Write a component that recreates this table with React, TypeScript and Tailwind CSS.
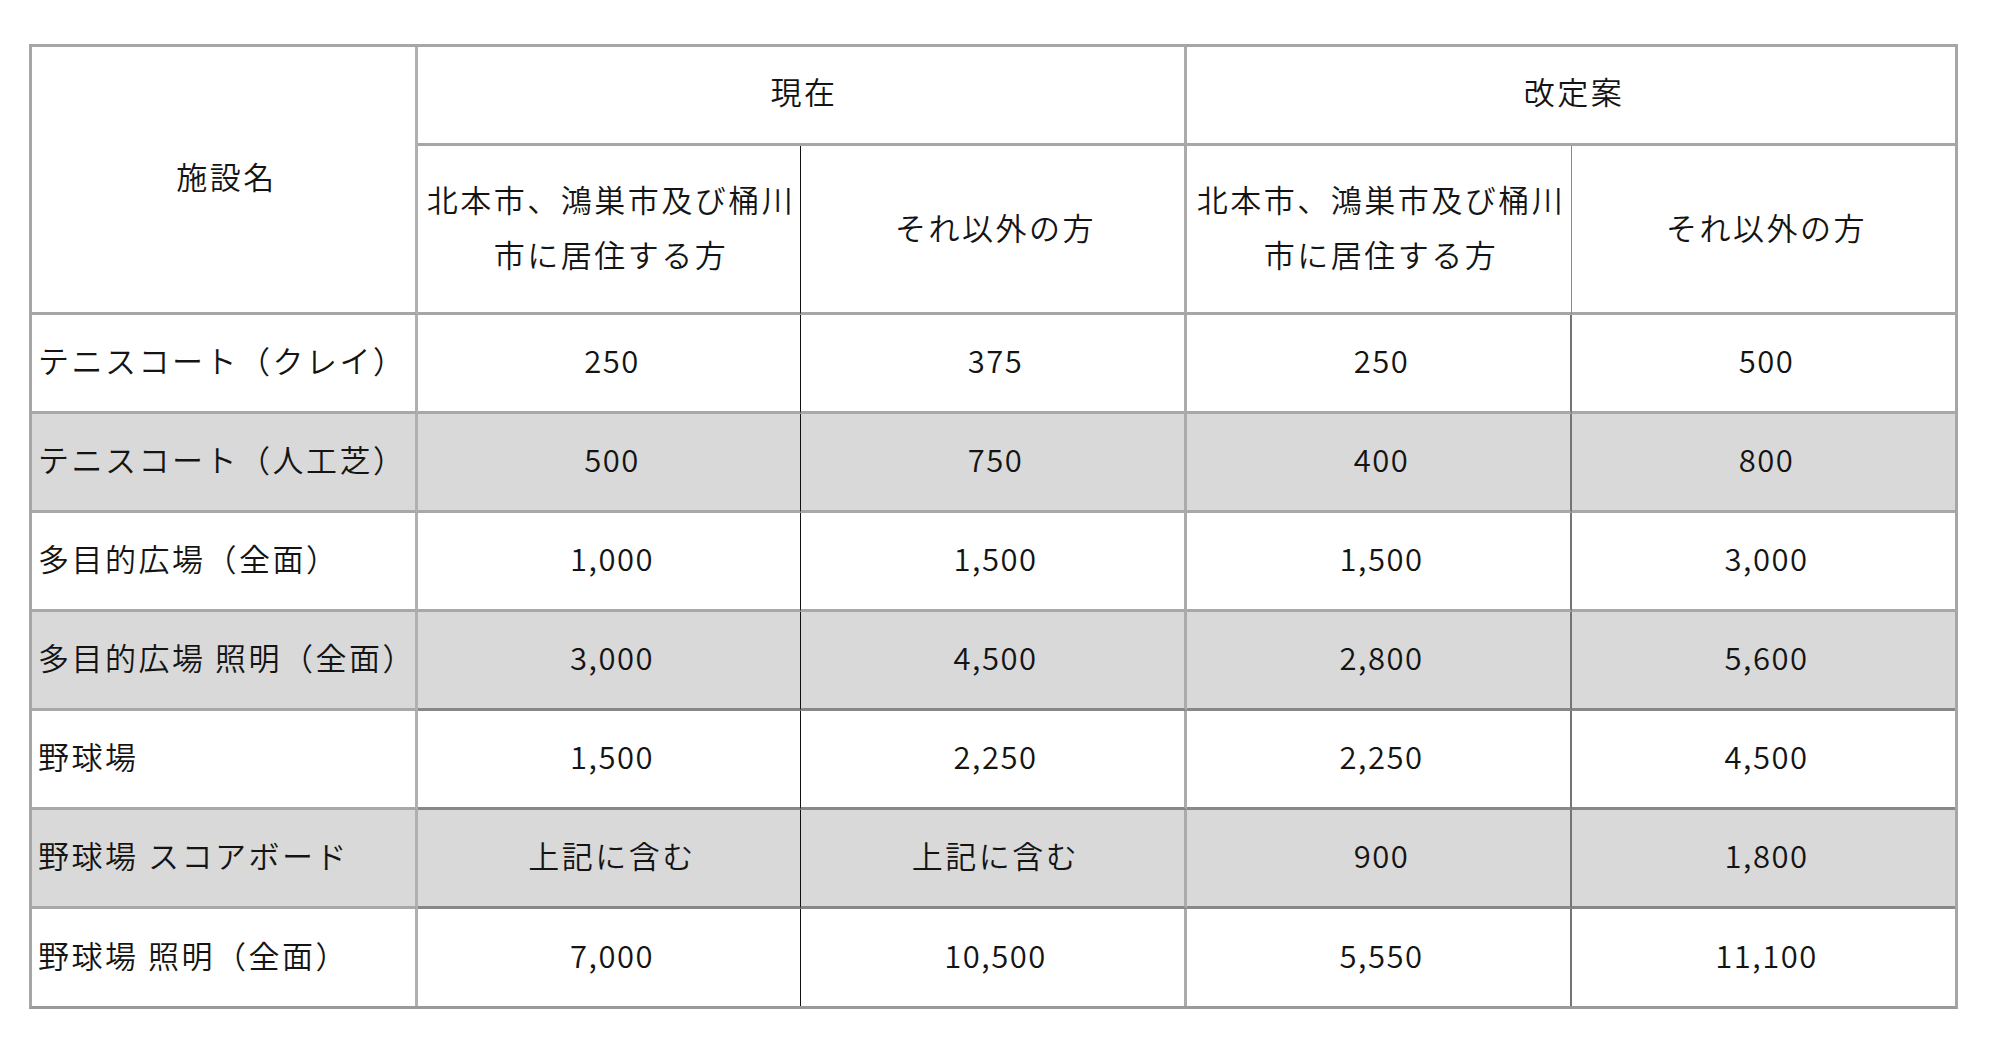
import React from "react";

type Row = { name: string; vals: string[]; gray: boolean; dark: boolean };

const rows: Row[] = [
  { name: "テニスコート（クレイ）", vals: ["250", "375", "250", "500"], gray: false, dark: false },
  { name: "テニスコート（人工芝）", vals: ["500", "750", "400", "800"], gray: true, dark: false },
  { name: "多目的広場（全面）", vals: ["1,000", "1,500", "1,500", "3,000"], gray: false, dark: false },
  { name: "多目的広場 照明（全面）", vals: ["3,000", "4,500", "2,800", "5,600"], gray: true, dark: true },
  { name: "野球場", vals: ["1,500", "2,250", "2,250", "4,500"], gray: false, dark: true },
  { name: "野球場 スコアボード", vals: ["上記に含む", "上記に含む", "900", "1,800"], gray: true, dark: true },
  { name: "野球場 照明（全面）", vals: ["7,000", "10,500", "5,550", "11,100"], gray: false, dark: false },
];

const rBorders = [
  "border-r-[1px] border-r-[#111111]",
  "border-r-[3px] border-r-[#ababab]",
  "border-r-[2px] border-r-[#747474]",
  "",
];

export default function App() {
  return (
    <div className="min-h-[1039px] w-[2000px] bg-white pl-[29px] pt-[44px]">
      <table
        className="table-fixed border-separate border-spacing-0 border-[3px] border-[#a6a6a6] border-b-[#9a9a9a] text-[#141414] text-[31px] tracking-[2.5px]"
        style={{ width: 1929 }}
      >
        <colgroup>
          <col className="w-[386px]" />
          <col className="w-[383px]" />
          <col className="w-[386px]" />
          <col className="w-[385px]" />
          <col className="w-[383px]" />
        </colgroup>
        <tbody className="font-['Noto_Sans_CJK_JP','Noto_Sans_CJK_SC',sans-serif] font-[350]">
          <tr>
            <td
              rowSpan={2}
              className="border-r-[3px] border-r-[#b0b0b0] border-b-[3px] border-b-[#a6a6a6] text-center align-middle pt-0 pb-[8px] pl-[6px] pr-0 leading-[40px]"
            >
              施設名
            </td>
            <td
              colSpan={2}
              className="h-[99px] border-r-[3px] border-r-[#ababab] border-b-[3px] border-b-[#a6a6a6] text-center align-middle pt-0 pb-[8px] pl-[6px] pr-0 leading-[40px]"
            >
              現在
            </td>
            <td
              colSpan={2}
              className="h-[99px] border-b-[3px] border-b-[#a6a6a6] text-center align-middle pt-0 pb-[8px] pl-[6px] pr-0 leading-[40px]"
            >
              改定案
            </td>
          </tr>
          <tr>
            <td className="h-[169px] border-r-[1px] border-r-[#111111] border-b-[3px] border-b-[#a6a6a6] text-center align-middle pt-0 pb-[6px] pl-[4px] pr-0 leading-[55px] whitespace-nowrap">
              北本市、鴻巣市及び桶川
              <br />
              市に居住する方
            </td>
            <td className="h-[169px] border-r-[3px] border-r-[#ababab] border-b-[3px] border-b-[#a6a6a6] text-center align-middle pt-0 pb-[6px] pl-[6px] pr-0 leading-[55px]">
              それ以外の方
            </td>
            <td className="h-[169px] border-r-[1px] border-r-[#8a8a8a] border-b-[3px] border-b-[#a6a6a6] text-center align-middle pt-0 pb-[6px] pl-[4px] pr-0 leading-[55px] whitespace-nowrap">
              北本市、鴻巣市及び桶川
              <br />
              市に居住する方
            </td>
            <td className="h-[169px] border-b-[3px] border-b-[#a6a6a6] text-center align-middle pt-0 pb-[6px] pl-[6px] pr-0 leading-[55px]">
              それ以外の方
            </td>
          </tr>
          {rows.map((r, i) => {
            const last = i === rows.length - 1;
            const bg = r.gray ? "bg-[#d9d9d9]" : "bg-white";
            const bb = last
              ? "border-b-0"
              : r.dark
              ? "border-b-[3px] border-b-[#888888]"
              : "border-b-[3px] border-b-[#a8a8a8]";
            const bbFirst = last ? "border-b-0" : "border-b-[3px] border-b-[#a8a8a8]";
            return (
              <tr key={i} className={bg}>
                <td
                  className={`${last ? "h-[97px]" : "h-[99px]"} border-r-[3px] border-r-[#b0b0b0] ${bbFirst} pl-[6px] pr-0 pt-0 pb-[6px] text-left align-middle leading-[40px] whitespace-nowrap`}
                >
                  {r.name}
                </td>
                {r.vals.map((v, j) => {
                  const numeric = /^[0-9,]+$/.test(v);
                  return (
                    <td
                      key={j}
                      className={`${last ? "h-[97px]" : "h-[99px]"} ${rBorders[j]} ${bb} ${numeric ? "tracking-[1.5px]" : ""} pl-[6px] pr-0 pt-0 pb-[6px] text-center align-middle leading-[40px] whitespace-nowrap`}
                    >
                      {v}
                    </td>
                  );
                })}
              </tr>
            );
          })}
        </tbody>
      </table>
    </div>
  );
}
